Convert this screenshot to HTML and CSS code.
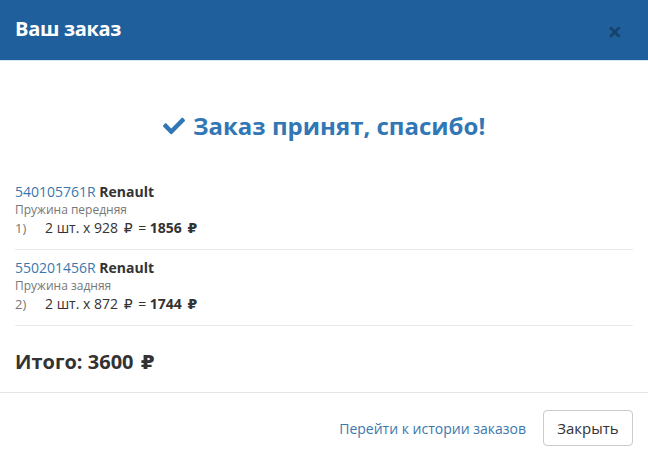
FILE: index.html
```html
<!DOCTYPE html>
<html lang="ru">
<head>
<meta charset="utf-8">
<title>Ваш заказ</title>
<link rel="stylesheet" href="styles.css">
</head>
<body>
<div class="modal">
  <header class="modal-header">
    <h4 class="modal-title">Ваш заказ</h4>
    <span class="close">×</span>
  </header>
  <section class="modal-body">
    <h3 class="success">
      <svg class="check" viewBox="0 0 512 512" aria-hidden="true"><path d="M173.898 439.404l-166.4-166.4c-9.997-9.997-9.997-26.206 0-36.204l36.203-36.204c9.997-9.998 26.207-9.998 36.204 0L192 312.69 432.095 72.596c9.997-9.997 26.207-9.997 36.204 0l36.203 36.204c9.997 9.997 9.997 26.206 0 36.204l-294.4 294.401c-9.998 9.997-26.207 9.997-36.204-.001z"/></svg>
      Заказ принят, спасибо!
    </h3>
    <div class="item">
      <div class="item-title"><a class="part" href="#">540105761R</a> <b>Renault</b></div>
      <div class="item-desc">Пружина передняя</div>
      <div class="item-price"><span class="num">1)</span>2 шт. x 928 <span class="rub">₽</span> = <b>1856 <span class="rub">₽</span></b></div>
    </div>
    <div class="item">
      <div class="item-title"><a class="part" href="#">550201456R</a> <b>Renault</b></div>
      <div class="item-desc">Пружина задняя</div>
      <div class="item-price"><span class="num">2)</span>2 шт. x 872 <span class="rub">₽</span> = <b>1744 <span class="rub">₽</span></b></div>
    </div>
    <div class="total">Итого: 3600 <span class="rub">₽</span></div>
  </section>
  <footer class="modal-footer">
    <a class="history" href="#">Перейти к истории заказов</a>
    <button class="btn" type="button">Закрыть</button>
  </footer>
</div>
</body>
</html>
```

FILE: styles.css
```css
html, body {
  margin: 0;
  padding: 0;
  background: #fff;
}
body {
  font-family: "Open Sans", "DejaVu Sans", sans-serif;
  font-size: 14px;
  color: #333;
}
.modal {
  width: 648px;
  display: flex;
  flex-direction: column;
}
.modal-header {
  flex-shrink: 0;
  background: #1f5f9b;
  height: 60px;
  padding: 0 15px;
  display: flex;
  align-items: center;
  justify-content: space-between;
  border-bottom: 1px solid #d8e6f3;
}
.modal-title {
  margin: 0;
  color: #fff;
  font-size: 20px;
  font-weight: 700;
  letter-spacing: -0.3px;
  line-height: 1;
  padding-bottom: 2px;
}
.close {
  color: #17426b;
  font-size: 25px;
  font-weight: 700;
  line-height: 1;
  margin-right: 11px;
  margin-top: 2px;
}
.modal-body {
  padding: 0 15px;
}
.success {
  margin: 48px 0 31px;
  text-align: center;
  color: #3277b5;
  font-size: 24px;
  font-weight: 700;
  line-height: 34px;
}
.check {
  width: 22px;
  height: 22px;
  fill: #3277b5;
  vertical-align: -2px;
  margin-right: 2px;
}
.item {
  padding: 8px 0 12px;
  border-bottom: 1px solid #eaeaea;
}
.item-title {
  line-height: 20px;
  font-size: 14px;
}
.part {
  color: #3a78ae;
  text-decoration: none;
}
.item-title b {
  color: #333;
  font-weight: 700;
}
.item-desc {
  font-size: 12px;
  line-height: 16px;
  color: #777;
}
.item-price {
  font-size: 14px;
  line-height: 18px;
  margin-top: 1px;
  color: #333;
}
.num {
  display: inline-block;
  width: 30px;
  color: #777;
  font-size: 13px;
}
.rub {
  font-family: "DejaVu Sans", sans-serif;
  margin: 0 2px 0 2px;
}
.total {
  font-size: 20px;
  font-weight: 700;
  line-height: 24px;
  margin: 24px 0 18px;
  color: #333;
}
.modal-footer {
  border-top: 1px solid #e5e5e5;
  padding: 17px 15px;
  display: flex;
  justify-content: flex-end;
  align-items: center;
  gap: 17px;
}
.history {
  color: #3a78ae;
  text-decoration: none;
  font-size: 14px;
}
.btn {
  font-family: "Open Sans", sans-serif;
  font-size: 15px;
  color: #333;
  background: #fff;
  border: 1px solid #ccc;
  border-radius: 4px;
  width: 90px;
  height: 36px;
  padding: 0;
}
```
